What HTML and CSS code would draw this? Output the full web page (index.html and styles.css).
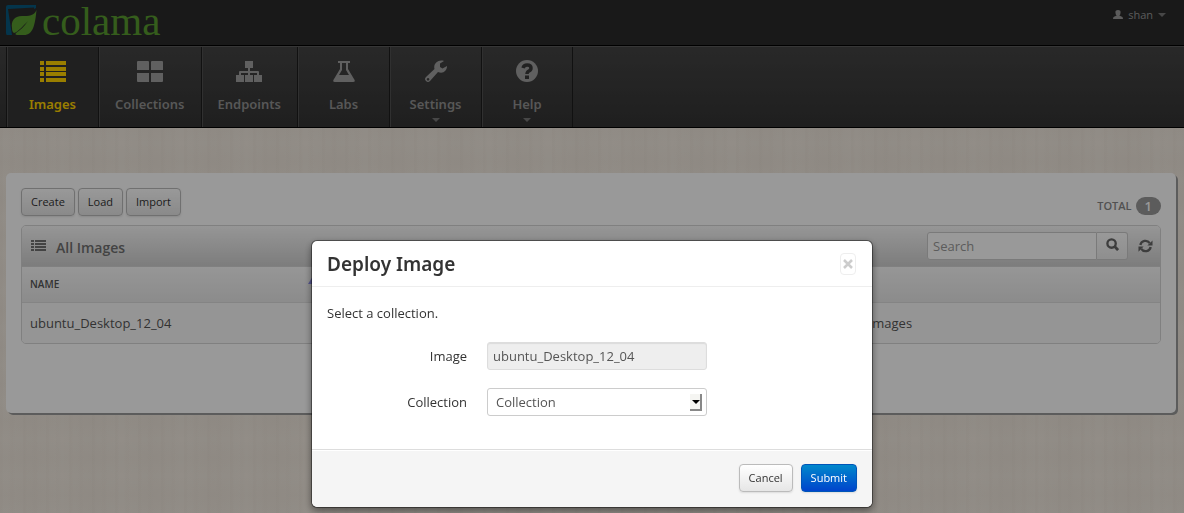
FILE: index.html
```html
<!DOCTYPE html>
<html lang="en">
<head>
  <meta charset="UTF-8" />
  <title>colama - Images</title>
  <link rel="stylesheet" href="styles.css">
</head>
<body>
  <header class="topbar">
    <a class="brand" href="#">
      <svg width="32" height="32" viewBox="0 0 32 32">
        <path fill="#07597f" d="M2 0H30V3L28 4V2.500L2 4L5 24L6 30H1Q0 30 0 28V2Q0 0 2 0Z"/>
        <path fill="#599c2f" d="M30.500 5C28 11 23 11 16 11C8 11 5 16 6 23Q6 27 8 28C12 27 17 21 22 16C18 22 14 25 10 28Q8 30 13 30H18C27 30 29 20 30.500 5Z"/>
      </svg>
      <span>colama</span>
    </a>
    <a class="user" href="#">
      <svg width="10" height="10" viewBox="0 0 10 10"><path fill="currentColor" d="M5 0C7 0 8 1 7.500 3Q7.300 5 6.300 5.500L9 6.700Q10 7.200 10 9H0Q0 7.200 1 6.700L3.700 5.500Q2.700 5 2.500 3C2 1 3 0 5 0Z"/></svg>
      shan
      <i class="caret"></i>
    </a>
  </header>

  <nav class="mainnav">
    <a class="active" href="#">
      <svg width="26" height="24" viewBox="0 0 26 24" fill="currentColor"><path d="M0 2h4v4H0zM6 2h20v4H6zM0 8h4v4H0zM6 8h20v4H6zM0 13h4v4H0zM6 13h20v4H6zM0 19h4v4H0zM6 19h20v4H6z"/></svg>
      <span>Images</span>
    </a>
    <a href="#">
      <svg width="26" height="24" viewBox="0 0 26 24" fill="currentColor"><path d="M1 2h10q1 0 1 1v8H0V3q0-1 1-1zM15 2h10q1 0 1 1v8H14V3q0-1 1-1zM0 14h12v9H1q-1 0-1-1zM14 14h12v8q0 1-1 1H14z"/></svg>
      <span>Collections</span>
    </a>
    <a href="#">
      <svg width="26" height="24" viewBox="0 0 26 24" fill="currentColor"><path d="M9 2h8v7h-3v3h8q1 0 1 1v3h3v7h-8v-7h3v-2h-7v2h3v7H9v-7h3v-2H5v2h3v7H0v-7h3v-3q0-1 1-1h8V9H9z"/></svg>
      <span>Endpoints</span>
    </a>
    <a href="#">
      <svg width="22" height="24" viewBox="0 0 22 24"><path fill="currentColor" fill-rule="evenodd" d="M5 2h12v2h-2v6l6 10q2 3-1 3H2q-3 0-1-3l6-10V4H5zM9 4v7l-3 5h10l-3-5V4z"/></svg>
      <span>Labs</span>
    </a>
    <a href="#">
      <svg width="22" height="24" viewBox="0 0 22 24"><path fill="currentColor" fill-rule="evenodd" d="M19 2L15 4.500V8L17.500 9.500L22 7C22 12 18 15 13 13L5 22Q3 24 1 22Q-1 20 1 18L9.500 10C8 5 13 0 19 2ZM3 19a1.300 1.300 0 1 0 .1 0Z"/></svg>
      <span>Settings</span>
      <i class="caret"></i>
    </a>
    <a href="#">
      <svg width="22" height="24" viewBox="0 0 22 24"><circle cx="11" cy="12" r="11" fill="currentColor"/><path fill="none" stroke="#3a3a3a" stroke-width="3.500" d="M7 9Q8 6 11 6Q15 6 15 9Q15 11 13 12Q11 13 11 15"/><path fill="#3a3a3a" d="M9 16.500h4v3.500H9z"/></svg>
      <span>Help</span>
      <i class="caret"></i>
    </a>
  </nav>

  <main class="content">
    <div class="toolbar">
      <div class="actions">
        <button class="btn" type="button">Create</button>
        <button class="btn" type="button">Load</button>
        <button class="btn" type="button">Import</button>
      </div>
      <div class="total">TOTAL <span class="badge">1</span></div>
    </div>

    <section class="widget">
      <div class="widget-header">
        <svg width="15" height="12" viewBox="0 0 15 12" fill="currentColor"><path d="M0 0h3v2H0zM4 0h11v2H4zM0 3h3v2H0zM4 3h11v2H4zM0 6h3v2H0zM4 6h11v2H4zM0 9h3v2H0zM4 9h11v2H4z"/></svg>
        <h3>All Images</h3>
        <form class="search">
          <input type="text" placeholder="Search" aria-label="Search">
          <button type="button" aria-label="Search">
            <svg width="13" height="13" viewBox="0 0 14 14"><circle cx="6" cy="6" r="4.500" fill="none" stroke="currentColor" stroke-width="2.500"/><path stroke="currentColor" stroke-width="3" d="M9 9l4 4"/></svg>
          </button>
        </form>
        <button class="refresh" type="button" aria-label="Refresh">
          <svg width="15" height="14" viewBox="0 0 16 14"><path fill="none" stroke="currentColor" stroke-width="2.500" d="M2.500 6A5.500 5.500 0 0 1 12.500 4M13.500 8A5.500 5.500 0 0 1 3.500 10"/><path fill="currentColor" d="M15.500 1v5.500H10zM.5 13V7.500H6z"/></svg>
        </button>
      </div>
      <table>
        <thead>
          <tr><th class="sorted">NAME</th><th></th></tr>
        </thead>
        <tbody>
          <tr><td>ubuntu_Desktop_12_04</td><td class="group">images</td></tr>
        </tbody>
      </table>
    </section>
  </main>

  <div class="backdrop">
    <form class="modal" role="dialog" aria-labelledby="modalTitle">
      <div class="modal-header">
        <h3 id="modalTitle">Deploy Image</h3>
        <button class="close" type="button" aria-label="Close">
          <svg width="10" height="10" viewBox="0 0 10 10"><path stroke="currentColor" stroke-width="2.500" d="M1 1l8 8M9 1l-8 8"/></svg>
        </button>
      </div>
      <div class="modal-body">
        <p>Select a collection.</p>
        <div class="control-group">
          <label for="image">Image</label>
          <input id="image" type="text" value="ubuntu_Desktop_12_04" readonly>
        </div>
        <div class="control-group">
          <label for="collection">Collection</label>
          <div class="select">
            <select id="collection"><option>Collection</option></select>
            <span class="arrow"></span>
          </div>
        </div>
      </div>
      <div class="modal-footer">
        <button class="btn" type="button">Cancel</button>
        <button class="btn btn-primary" type="button">Submit</button>
      </div>
    </form>
  </div>
</body>
</html>
```
FILE: styles.css
```css
* {
  box-sizing: border-box;
}

body {
  margin: 0;
  min-height: 100vh;
  font-family: "Open Sans", sans-serif;
  font-size: 13px;
  line-height: 18px;
  color: #555;
  background-color: #f3ebe1;
  background-image:
    repeating-linear-gradient(90deg, rgba(120, 100, 80, 0.02) 0 2px, transparent 4px 9px, rgba(120, 100, 80, 0.01) 11px 13px, transparent 15px 23px),
    repeating-linear-gradient(90deg, transparent 0, rgba(120, 100, 80, 0.02) 30px, transparent 61px),
    repeating-linear-gradient(0deg, transparent 0, rgba(120, 100, 80, 0.02) 18px, transparent 37px);
}

a {
  color: inherit;
  text-decoration: none;
}

button,
input,
select {
  font-family: inherit;
}

h3,
p {
  margin: 0;
}

.topbar {
  display: flex;
  justify-content: space-between;
  align-items: flex-start;
  height: 46px;
  padding: 5px 18px 0 6px;
  background: #2b2b2b;
  border-bottom: 1px solid #000;
}

.brand {
  display: flex;
  gap: 4px;
  font-family: "Liberation Serif", serif;
  font-size: 41px;
  line-height: 32px;
  color: #599c2f;
}

.user {
  display: flex;
  align-items: center;
  gap: 5px;
  height: 20px;
  font-size: 11px;
  color: #999;
}

.caret {
  border: 4px solid transparent;
  border-top-color: #777;
  border-bottom: 0;
}

.mainnav {
  display: flex;
  height: 82px;
  padding-left: 6px;
  background: linear-gradient(#444, #343434);
  border-top: 1px solid #5a5a5a;
  border-bottom: 1px solid #000;
}

.mainnav a {
  display: flex;
  flex-direction: column;
  align-items: center;
  min-width: 92px;
  padding: 12px 16px 0;
  font-family: "Noto Sans", sans-serif;
  font-size: 13px;
  font-weight: 600;
  color: #929292;
  border-left: 1px solid #1d1d1d;
  box-shadow: inset 1px 0 #505050;
}

.mainnav a:last-child {
  border-right: 1px solid #1d1d1d;
}

.mainnav svg {
  color: #a0a0a0;
  margin-bottom: 12px;
}

.mainnav .caret {
  margin-top: 5px;
}

.mainnav .active,
.mainnav .active svg {
  color: #ffd200;
}

.mainnav .active {
  background: #363636;
}

.content {
  min-height: 240px;
  margin: 45px 8px 0 6px;
  padding: 15px 15px 0;
  background: #fff;
  border-radius: 5px;
  box-shadow: 2px 2px #999;
}

.toolbar {
  display: flex;
  justify-content: space-between;
  margin-bottom: 9px;
}

.actions {
  display: flex;
  gap: 3px;
}

.btn {
  height: 28px;
  padding: 0 9px 2px;
  font-size: 11px;
  color: #333;
  background: linear-gradient(#fff, #e6e6e6);
  border: 1px solid #bbb;
  border-radius: 4px;
  box-shadow: 0 1px 2px rgba(0, 0, 0, 0.1);
}

.btn-primary {
  color: #fff;
  background: linear-gradient(#08c, #04c);
  border-color: #0055b8;
}

.total {
  display: flex;
  gap: 4px;
  align-items: center;
  padding-top: 8px;
  font-size: 11px;
  font-weight: 600;
  color: #888;
}

.badge {
  padding: 0 9px;
  font-size: 13px;
  color: #fff;
  background: #999;
  border-radius: 9px;
}

.widget {
  border: 1px solid #d5d5d5;
  border-radius: 5px;
  overflow: hidden;
}

.widget-header {
  display: flex;
  align-items: center;
  height: 41px;
  padding: 0 7px 0 9px;
  color: #707070;
  background: linear-gradient(#fafafa, #d0d0d0);
  border-bottom: 1px solid #d5d5d5;
}

.widget-header h3 {
  flex: 1;
  padding: 3px 0 0 10px;
  font-size: 14px;
  font-weight: 600;
}

.search {
  display: flex;
  height: 28px;
}

.search input {
  width: 170px;
  padding: 0 5px;
  font-size: 13px;
  background: #fff;
  border: 1px solid #ccc;
  border-radius: 3px 0 0 3px;
}

.search input::placeholder {
  color: #999;
}

.search button {
  width: 31px;
  padding: 0;
  color: #666;
  background: linear-gradient(#fff, #eee);
  border: 1px solid #ccc;
  border-left: 0;
  border-radius: 0 3px 3px 0;
}

.refresh {
  display: flex;
  margin-left: 10px;
  padding: 0;
  color: #666;
  background: none;
  border: 0;
}

table {
  width: 100%;
  table-layout: fixed;
  border-collapse: collapse;
}

th {
  height: 35px;
  padding: 0 8px;
  font-size: 10px;
  font-weight: 600;
  text-align: left;
  background: linear-gradient(#fafafa, #e9e9e9);
}

.sorted {
  width: 304px;
}

.sorted::after {
  content: "";
  float: right;
  margin-top: 1px;
  border: 5px solid transparent;
  border-top: 0;
  border-bottom: 8px solid #9090ee;
}

td {
  height: 41px;
  padding: 0 8px;
  background: #f9f9f9;
  border-top: 1px solid #ddd;
}

.group {
  padding-left: 543px;
}

.backdrop {
  position: fixed;
  inset: 0;
  display: flex;
  justify-content: center;
  align-items: flex-start;
  padding-top: 240px;
  background: rgba(0, 0, 0, 0.4);
}

.modal {
  width: 562px;
  color: #333;
  background: #fff;
  background-clip: padding-box;
  border: 1px solid rgba(0, 0, 0, 0.4);
  border-radius: 6px;
  box-shadow: 0 3px 7px rgba(0, 0, 0, 0.4);
}

.modal-header {
  display: flex;
  justify-content: space-between;
  align-items: center;
  height: 46px;
  padding: 0 16px 0 15px;
  border-bottom: 1px solid #eee;
}

.modal-header h3 {
  font-family: "Noto Sans", sans-serif;
  font-size: 19px;
  font-weight: 600;
}

.close {
  display: flex;
  align-items: center;
  justify-content: center;
  width: 16px;
  height: 22px;
  padding: 0;
  color: #ccc;
  background: #fff;
  border: 1px solid #eee;
  border-radius: 4px;
}

.modal-body {
  padding: 17px 15px 33px;
}

.modal-body p {
  margin-bottom: 20px;
}

.control-group {
  display: flex;
  align-items: center;
  gap: 20px;
}

.control-group + .control-group {
  margin-top: 18px;
}

.control-group label {
  width: 140px;
  text-align: right;
}

.control-group input,
.control-group select {
  width: 220px;
  height: 28px;
  padding: 0 5px;
  font-size: 13px;
  color: #555;
  background: #fff;
  border: 1px solid #ccc;
  border-radius: 3px;
}

.control-group input {
  background: #eee;
  border-color: #ddd;
  box-shadow: inset 0 1px 1px rgba(0, 0, 0, 0.08);
}

.control-group select {
  display: block;
  padding: 0 8px;
  appearance: none;
}

.select {
  position: relative;
}

.arrow {
  position: absolute;
  top: 6px;
  right: 5px;
  width: 12px;
  height: 17px;
  background: #f5f5f2;
  border-right: 2px solid #888;
  border-bottom: 2px solid #888;
  pointer-events: none;
}

.arrow::after {
  content: "";
  position: absolute;
  top: 6px;
  left: 2px;
  border: 4px solid transparent;
  border-top-color: #000;
  border-bottom: 0;
}

.modal-footer {
  display: flex;
  justify-content: flex-end;
  gap: 8px;
  padding: 14px 15px 15px;
  background: #f5f5f5;
  border-top: 1px solid #ddd;
  border-radius: 0 0 6px 6px;
  box-shadow: inset 0 1px #fff;
}
```
